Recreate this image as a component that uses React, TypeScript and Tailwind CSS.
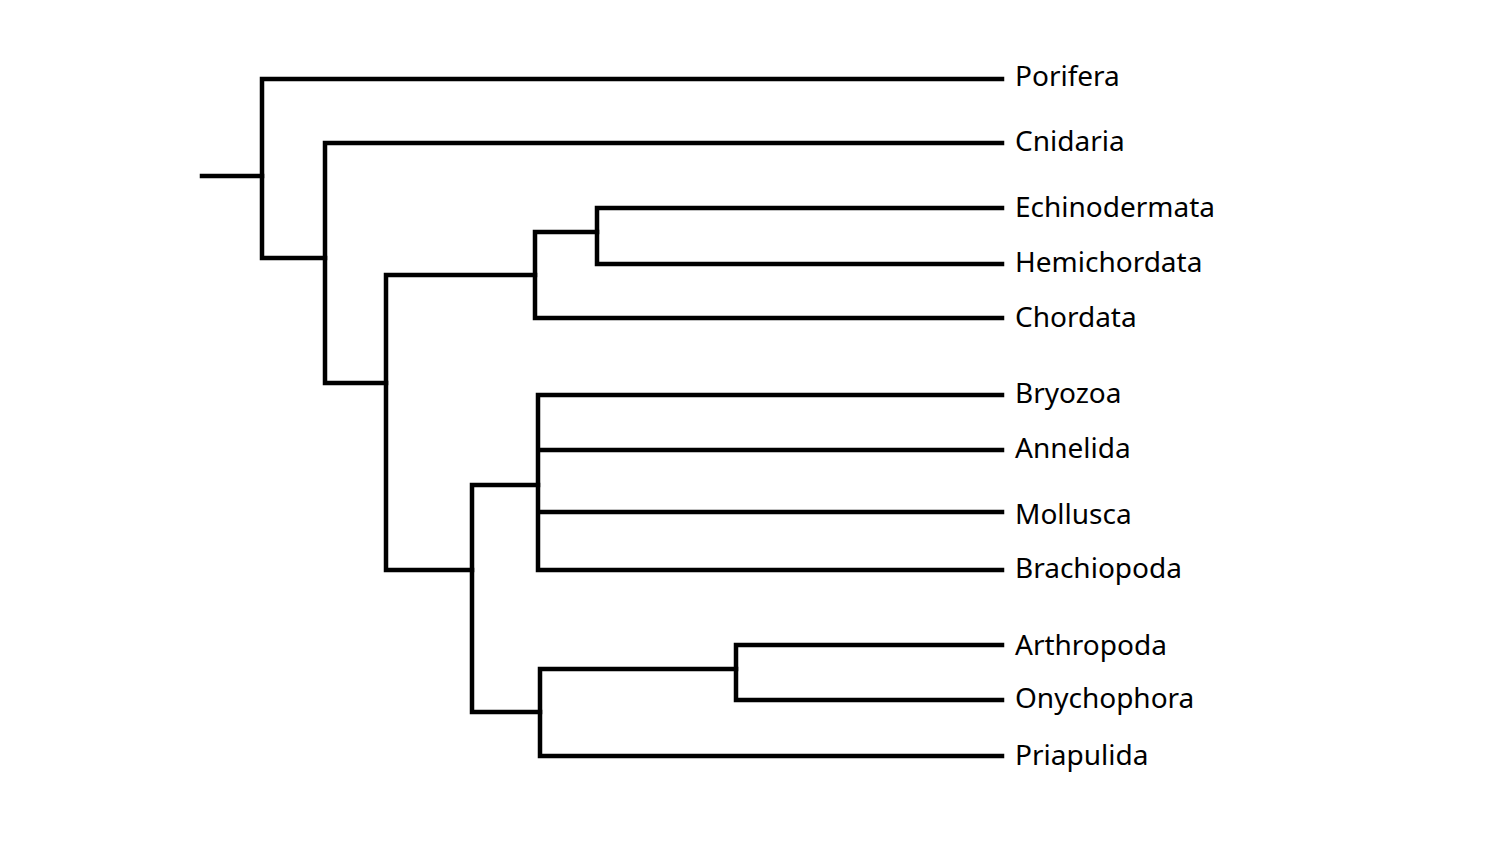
const leaves = [
  { name: 'Porifera', y: 79, base: 86 },
  { name: 'Cnidaria', y: 143, base: 151 },
  { name: 'Echinodermata', y: 208, base: 217 },
  { name: 'Hemichordata', y: 264, base: 272 },
  { name: 'Chordata', y: 318, base: 327 },
  { name: 'Bryozoa', y: 395, base: 403 },
  { name: 'Annelida', y: 450, base: 458 },
  { name: 'Mollusca', y: 512, base: 524 },
  { name: 'Brachiopoda', y: 570, base: 578 },
  { name: 'Arthropoda', y: 645, base: 655 },
  { name: 'Onychophora', y: 700, base: 708 },
  { name: 'Priapulida', y: 756, base: 765 },
];

const TIP = 1002;

// each path: vertical bar of a node plus the horizontal branches leaving it
const branches = [
  // root stub
  'M202 176 H262',
  // root node
  'M262 79 V258 M262 79 H1002 M262 258 H325',
  // cnidaria node
  'M325 143 V383 M325 143 H1002 M325 383 H386',
  // bilateria node
  'M386 275 V570 M386 275 H535 M386 570 H472',
  // deuterostomes
  'M535 232 V318 M535 232 H597 M535 318 H1002',
  'M597 208 V264 M597 208 H1002 M597 264 H1002',
  // protostomes
  'M472 485 V712 M472 485 H538 M472 712 H540',
  'M538 395 V570 M538 395 H1002 M538 450 H1002 M538 512 H1002 M538 570 H1002',
  'M540 669 V756 M540 669 H736 M540 756 H1002',
  'M736 645 V700 M736 645 H1002 M736 700 H1002',
];

export default function App() {
  return (
    <div className="w-[1500px] h-[844px] bg-white">
      <svg width="1500" height="844" viewBox="0 0 1500 844" className="block">
        <g stroke="#000" strokeWidth="4.5" fill="none" strokeLinecap="square" strokeLinejoin="miter">
          {branches.map((d, i) => (
            <path key={i} d={d} />
          ))}
        </g>
        <g fill="#000" fontSize="28" style={{ fontFamily: '"Noto Sans", "Open Sans", sans-serif' }}>
          {leaves.map((l) => (
            <text key={l.name} x={TIP + 13} y={l.base}>
              {l.name}
            </text>
          ))}
        </g>
      </svg>
    </div>
  );
}
